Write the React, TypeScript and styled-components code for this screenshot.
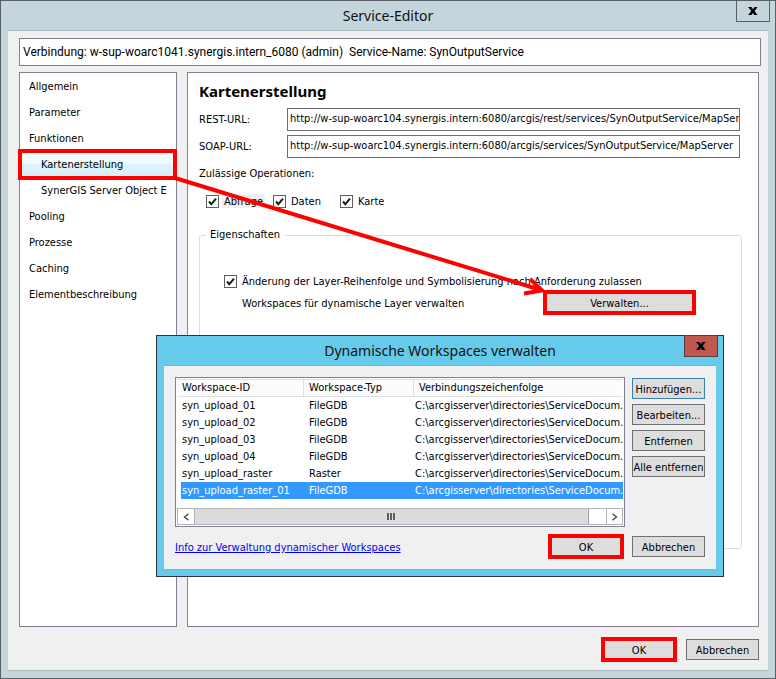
import React from "react";
import styled, { createGlobalStyle, css } from "styled-components";

const uiFont = '"DejaVu Sans Condensed", "DejaVu Sans", sans-serif';
const titleFont = '"Noto Sans", "Open Sans", sans-serif';

const GlobalStyle = createGlobalStyle`
  *, *::before, *::after { box-sizing: border-box; }
  body { margin: 0; }
  body, button, input, table {
    font-family: ${uiFont};
    font-size: 11px;
    color: #000;
  }
`;

const Window = styled.main`
  position: relative;
  display: flex;
  flex-direction: column;
  min-height: 100vh;
  padding: 0 7px 7px;
  border: 1px solid #5b6068;
  background: #c4d6dc;
`;

const TitleBar = styled.header`
  display: flex;
  align-items: center;
  justify-content: center;
  position: relative;
  height: 29px;
`;

const Title = styled.h1`
  margin: 0;
  font: 400 14px/20px ${titleFont};
  color: #111;
`;

const CloseButton = styled.button<{ $danger?: boolean }>`
  position: absolute;
  top: -1px;
  right: -2px;
  display: flex;
  align-items: center;
  justify-content: center;
  width: 34px;
  height: 22px;
  padding: 0;
  border: 1px solid ${(p) => (p.$danger ? "#5f3a3c" : "#5b6068")};
  background: ${(p) => (p.$danger ? "#c1584f" : "transparent")};
`;

const WindowBody = styled.div`
  flex: 1;
  display: flex;
  flex-direction: column;
  padding: 7px 9px 8px 11px;
  border-top: 1px solid #a9b9c0;
  border-bottom: 1px solid #a9b9c0;
  background: #f0f0f0;
`;

const frame = css`
  border: 1px solid #828092;
  background: #fff;
`;

const ConnectionBar = styled.div`
  ${frame}
  display: flex;
  align-items: center;
  gap: 6px;
  height: 28px;
  margin-right: -2px;
  padding: 0 3px;
  font: 400 12px/16px Roboto, sans-serif;
  white-space: nowrap;
`;

const Panels = styled.div`
  flex: 1;
  display: grid;
  grid-template-columns: 158px 1fr;
  gap: 10px;
  margin-top: 6px;
`;

const Sidebar = styled.nav`
  ${frame}
`;

const SidebarList = styled.ul`
  margin: 0;
  padding: 0;
  list-style: none;
`;

const redFrame = css`
  content: "";
  position: absolute;
  border: 4px solid #f00;
  pointer-events: none;
`;

const SidebarItem = styled.a<{ $nested?: boolean; $selected?: boolean }>`
  position: relative;
  display: block;
  height: 26px;
  padding-left: ${(p) => (p.$nested ? 21 : 9)}px;
  line-height: 28px;
  white-space: nowrap;
  color: #000;
  text-decoration: none;
  ${(p) =>
    p.$selected &&
    css`
      background: linear-gradient(#fbfeff, #edf9fe 48%, #def3fc 52%, #d3eefb);
      &::after {
        ${redFrame}
        inset: -2px -1px -3px -2px;
      }
    `}
`;

const Content = styled.section`
  ${frame}
  display: flex;
  flex-direction: column;
  min-width: 0;
  padding: 8px 16px 77px 11px;
`;

const Heading = styled.h2`
  margin: 0 0 7px;
  font: 700 15px/20px ${titleFont};
`;

const Field = styled.div`
  display: grid;
  grid-template-columns: 88px 1fr;
  align-items: center;
  margin: 0 2px 4px 0;
`;

const TextInput = styled.input`
  width: 100%;
  height: 23px;
  padding: 0 0 3px 2px;
  border: 1px solid #6d6d6d;
  border-radius: 0;
  background: #fff;
  outline: none;
`;

const GroupLabel = styled.div`
  margin-top: 3px;
  line-height: 18px;
`;

const CheckRow = styled.div`
  display: grid;
  grid-template-columns: repeat(3, 67px);
  margin: 10px 0 0 7px;
`;

const CheckLabel = styled.label`
  display: flex;
  align-items: center;
  gap: 3px;
  height: 16px;
  white-space: nowrap;
`;

const CheckInput = styled.input`
  appearance: none;
  flex: none;
  display: grid;
  width: 13px;
  height: 13px;
  margin: 0;
  border: 1px solid #5f5f5f;
  background: #fff;
  &:checked {
    background: #fff
      url("data:image/svg+xml,%3Csvg xmlns='http://www.w3.org/2000/svg' viewBox='0 0 11 11'%3E%3Cpath d='M2 5.5 4.3 8.2 9 2.6' fill='none' stroke='%231c1c1c' stroke-width='2'/%3E%3C/svg%3E")
      center / 11px 11px no-repeat;
  }
`;

const CheckText = styled.span<{ $focused?: boolean }>`
  padding: 1px 2px 0;
  line-height: 13px;
  background: ${(p) => (p.$focused ? "#f0f0f0" : "transparent")};
`;

const Group = styled.fieldset`
  flex: 1;
  min-width: 0;
  margin: 17px 0 0;
  padding: 29px 45px 0 24px;
  border: 1px solid #d5dfe5;
  border-radius: 3px;
`;

const Legend = styled.legend`
  margin-left: -18px;
  padding: 0 5px 0 4px;
  line-height: 18px;
`;

const GroupRow = styled.div`
  display: flex;
  align-items: center;
  justify-content: space-between;
  height: 25px;
  margin-top: 1px;
  padding-left: 18px;
`;

const RowText = styled.span`
  padding-top: 2px;
`;

const Button = styled.button<{ $active?: boolean }>`
  width: 73px;
  height: 21px;
  padding: 1px 0 0;
  border: 1px solid ${(p) => (p.$active ? "#3c7fb1" : "#707070")};
  background: #ddd;
  white-space: nowrap;
`;

const MarkedButton = styled(Button)<{ $wide?: boolean }>`
  width: ${(p) => (p.$wide ? 153 : 76)}px;
  height: 25px;
  border: 4px solid #f00;
`;

const ButtonRow = styled.div`
  display: flex;
  align-items: center;
  justify-content: flex-end;
  gap: 9px;
  margin-top: 10px;
`;

const Dialog = styled.section`
  position: absolute;
  top: 334px;
  left: 155px;
  right: 51px;
  padding: 0 7px 6px;
  border: 1px solid #2c3238;
  background: #66caea;
`;

const DialogBody = styled.div`
  display: grid;
  grid-template-columns: minmax(0, 1fr) 73px;
  column-gap: 7px;
  padding: 11px 11px 10px;
  border-top: 1px solid #7fb3c8;
  border-bottom: 1px solid #7fb3c8;
  background: #f0f0f0;
`;

const ListBox = styled.div`
  ${frame}
  display: flex;
  flex-direction: column;
  height: 150px;
  padding: 1px;
`;

const TableClip = styled.div`
  flex: 1;
  overflow: hidden;
`;

const Table = styled.table`
  width: 100%;
  table-layout: fixed;
  border-collapse: separate;
  border-spacing: 0;
`;

const HeadCell = styled.th<{ $width?: number }>`
  width: ${(p) => (p.$width ? `${p.$width}px` : "auto")};
  height: 18px;
  padding: 0 0 0 5px;
  border: solid #dedfe0;
  border-width: 1px 0 1px 0;
  background: #fcfcfc;
  font-weight: 400;
  line-height: 16px;
  text-align: left;
  & + & {
    border-left: 1px solid #dedfe0;
  }
`;

const Row = styled.tr<{ $selected?: boolean }>`
  color: ${(p) => (p.$selected ? "#fff" : "#000")};
  td {
    background: ${(p) => (p.$selected ? "#3399ff" : "#fff")};
  }
  td:first-child {
    border-left: 4px solid #fff;
    padding-left: 1px;
  }
`;

const Cell = styled.td`
  height: 17px;
  padding: 0 0 0 6px;
  line-height: 17px;
  white-space: nowrap;
  overflow: hidden;
`;

const PathCell = styled(Cell)`
  padding-left: 2px;
`;

const ScrollBar = styled.div`
  display: grid;
  grid-template-columns: 17px 1fr 17px 17px;
  height: 17px;
  border: 1px solid #b4b4b4;
  border-right: 0;
  background: #fff;
`;

const ScrollArrow = styled.button`
  display: grid;
  place-items: center;
  height: 15px;
  padding: 0;
  border: solid #b4b4b4;
  border-width: 0 1px;
  background: #fff;
  &:first-child {
    border-left: 0;
  }
`;

const ScrollThumb = styled.div`
  display: grid;
  place-items: center;
  border-right: 1px solid #a6a6a6;
  background: #dcdcdc;
`;

const SideButtons = styled.div`
  display: flex;
  flex-direction: column;
  gap: 5px;
  padding-top: 1px;
`;

const DialogFooter = styled.div`
  grid-column: 1 / -1;
  display: flex;
  align-items: center;
  gap: 8px;
  margin-top: 7px;
`;

const InfoLink = styled.a`
  margin-right: auto;
  padding-top: 2px;
  color: #00f;
  text-decoration: underline;
`;

const Arrow = styled.svg`
  position: absolute;
  top: 169px;
  left: 169px;
  pointer-events: none;
`;

const CloseIcon = () => (
  <svg width="10" height="8" viewBox="0 0 10 8" aria-hidden="true">
    <path d="M0 0H3.5L5 2.2 6.500 0H9.500L6.600 4 9.500 8H6.200L4.900 5.900 3.500 8H0.200L3.200 4Z" fill="#000" />
  </svg>
);

const Chevron = ({ d }: { d: string }) => (
  <svg width="7" height="8" viewBox="0 0 7 8" aria-hidden="true">
    <path d={d} fill="none" stroke="#555" strokeWidth="1.500" />
  </svg>
);

const Grip = () => (
  <svg width="9" height="7" viewBox="0 0 9 7" aria-hidden="true">
    <path d="M0 0H2V7H0ZM3 0H5V7H3ZM6 0H8V7H6Z" fill="#606060" />
  </svg>
);

const sections = [
  { label: "Allgemein" },
  { label: "Parameter" },
  { label: "Funktionen" },
  { label: "Kartenerstellung", nested: true, selected: true },
  { label: "SynerGIS Server Object E", nested: true },
  { label: "Pooling" },
  { label: "Prozesse" },
  { label: "Caching" },
  { label: "Elementbeschreibung" },
];

const urls = [
  { id: "rest", label: "REST-URL:", value: "http://w-sup-woarc104.synergis.intern:6080/arcgis/rest/services/SynOutputService/MapSer" },
  { id: "soap", label: "SOAP-URL:", value: "http://w-sup-woarc104.synergis.intern:6080/arcgis/services/SynOutputService/MapServer" },
];

const workspaces = [
  ["syn_upload_01", "FileGDB"],
  ["syn_upload_02", "FileGDB"],
  ["syn_upload_03", "FileGDB"],
  ["syn_upload_04", "FileGDB"],
  ["syn_upload_raster", "Raster"],
  ["syn_upload_raster_01", "FileGDB"],
];

export default function App() {
  return (
    <>
      <GlobalStyle />
      <Window>
        <TitleBar>
          <Title>Service-Editor</Title>
          <CloseButton aria-label="Schließen">
            <CloseIcon />
          </CloseButton>
        </TitleBar>
        <WindowBody>
          <ConnectionBar>
            <span>Verbindung: w-sup-woarc1041.synergis.intern_6080 (admin)</span>
            <span>Service-Name: SynOutputService</span>
          </ConnectionBar>
          <Panels>
            <Sidebar>
              <SidebarList>
                {sections.map((s) => (
                  <li key={s.label}>
                    <SidebarItem href="#" $nested={s.nested} $selected={s.selected}>
                      {s.label}
                    </SidebarItem>
                  </li>
                ))}
              </SidebarList>
            </Sidebar>
            <Content>
              <Heading>Kartenerstellung</Heading>
              {urls.map((u) => (
                <Field key={u.id}>
                  <label htmlFor={u.id}>{u.label}</label>
                  <TextInput id={u.id} readOnly value={u.value} />
                </Field>
              ))}
              <GroupLabel>Zulässige Operationen:</GroupLabel>
              <CheckRow>
                {["Abfrage", "Daten", "Karte"].map((name, i) => (
                  <CheckLabel key={name}>
                    <CheckInput type="checkbox" defaultChecked />
                    <CheckText $focused={i === 0}>{name}</CheckText>
                  </CheckLabel>
                ))}
              </CheckRow>
              <Group>
                <Legend>Eigenschaften</Legend>
                <CheckLabel>
                  <CheckInput type="checkbox" defaultChecked />
                  <CheckText>Änderung der Layer-Reihenfolge und Symbolisierung nach Anforderung zulassen</CheckText>
                </CheckLabel>
                <GroupRow>
                  <RowText>Workspaces für dynamische Layer verwalten</RowText>
                  <MarkedButton $wide>Verwalten...</MarkedButton>
                </GroupRow>
              </Group>
            </Content>
          </Panels>
          <ButtonRow>
            <MarkedButton>OK</MarkedButton>
            <Button>Abbrechen</Button>
          </ButtonRow>
        </WindowBody>

        <Dialog role="dialog" aria-label="Dynamische Workspaces verwalten">
          <TitleBar>
            <Title as="h2">Dynamische Workspaces verwalten</Title>
            <CloseButton $danger aria-label="Schließen">
              <CloseIcon />
            </CloseButton>
          </TitleBar>
          <DialogBody>
            <ListBox>
              <TableClip>
                <Table>
                  <thead>
                    <tr>
                      <HeadCell $width={126}>Workspace-ID</HeadCell>
                      <HeadCell $width={110}>Workspace-Typ</HeadCell>
                      <HeadCell>Verbindungszeichenfolge</HeadCell>
                    </tr>
                  </thead>
                  <tbody>
                    {workspaces.map(([id, type], i) => (
                      <Row key={id} $selected={i === workspaces.length - 1}>
                        <Cell>{id}</Cell>
                        <Cell>{type}</Cell>
                        <PathCell>C:\arcgisserver\directories\ServiceDocum.</PathCell>
                      </Row>
                    ))}
                  </tbody>
                </Table>
              </TableClip>
              <ScrollBar>
                <ScrollArrow aria-label="Nach links">
                  <Chevron d="M5.500 0.800 1.500 4 5.500 7.200" />
                </ScrollArrow>
                <ScrollThumb>
                  <Grip />
                </ScrollThumb>
                <span />
                <ScrollArrow aria-label="Nach rechts">
                  <Chevron d="M1.500 0.800 5.500 4 1.500 7.200" />
                </ScrollArrow>
              </ScrollBar>
            </ListBox>
            <SideButtons>
              <Button $active>Hinzufügen...</Button>
              <Button>Bearbeiten...</Button>
              <Button>Entfernen</Button>
              <Button>Alle entfernen</Button>
            </SideButtons>
            <DialogFooter>
              <InfoLink href="#">Info zur Verwaltung dynamischer Workspaces</InfoLink>
              <MarkedButton>OK</MarkedButton>
              <Button>Abbrechen</Button>
            </DialogFooter>
          </DialogBody>
        </Dialog>

        <Arrow width="380" height="130" viewBox="170 170 380 130" aria-hidden="true">
          <path d="M175 178 541 290M530 279 542 290.500 524 293.500" fill="none" stroke="#f00" strokeWidth="4" />
        </Arrow>
      </Window>
    </>
  );
}
